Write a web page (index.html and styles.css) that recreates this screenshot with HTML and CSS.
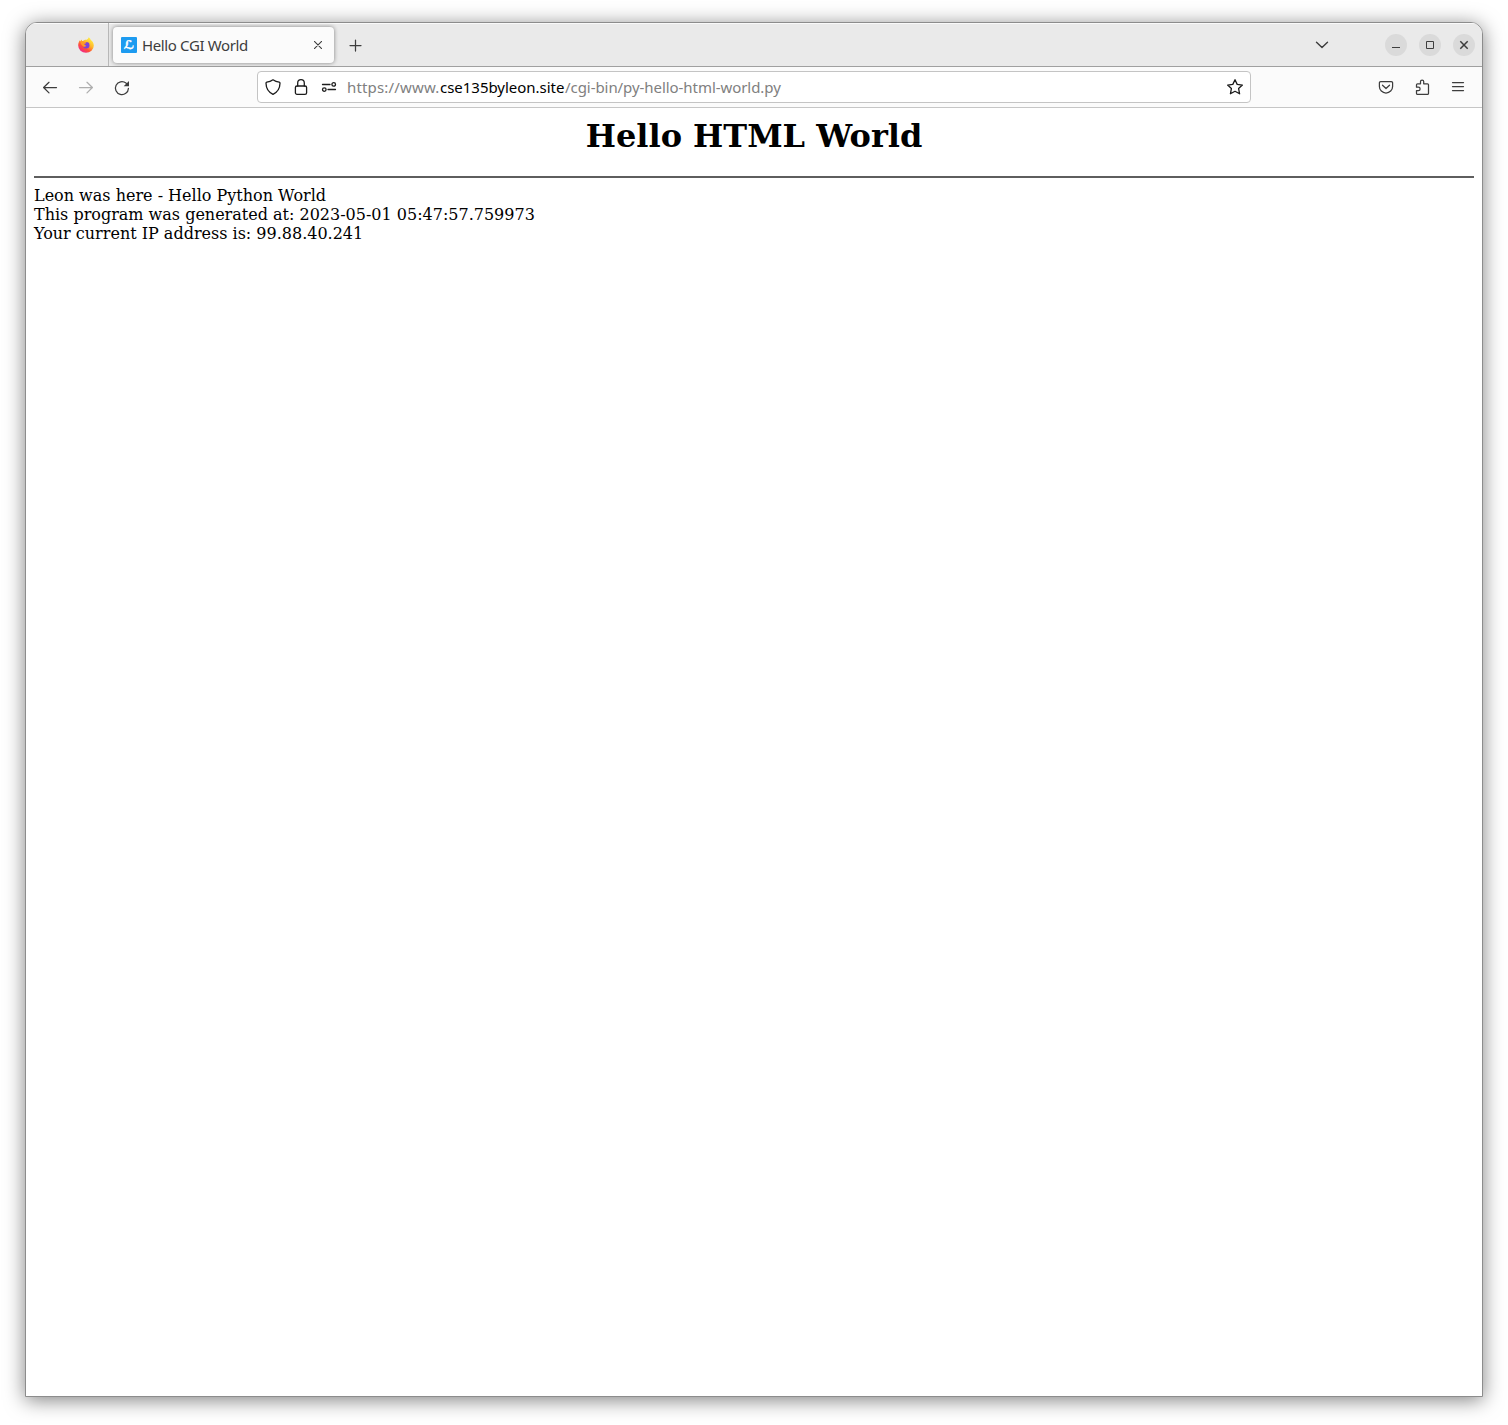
FILE: index.html
```html
<!DOCTYPE html>
<html lang="en">
<head>
<meta charset="utf-8">
<title>Hello CGI World</title>
<link rel="stylesheet" href="styles.css">
</head>
<body>
<div class="window">
  <header class="tabbar">
    <div class="firefox-view">
      <svg width="16" height="16" viewBox="0 0 16 16">
        <defs>
          <linearGradient id="flame" x1="0.85" y1="0.1" x2="0.25" y2="0.95">
            <stop offset="0" stop-color="#fff044"/>
            <stop offset="0.4" stop-color="#ffb52a"/>
            <stop offset="0.7" stop-color="#ff5036"/>
            <stop offset="1" stop-color="#f0288a"/>
          </linearGradient>
        </defs>
        <path fill="url(#flame)" d="M10.7.3c1.1.7 1.8 1.700 2.100 2.800 1.700 1 3 3.200 3 5.400a7.800 7.300 0 0 1-15.600 0c0-2 .6-3.800 1.700-5.200l.2 1.100 1.400-1.800c.1.8.5 1.300 1 1.700 1.100-1.300 2.600-1.800 4.200-1.600 1-.5 1.700-1.300 2-2.400z"/>
        <circle cx="8.300" cy="8.200" r="3.200" fill="#7b42dc"/>
        <path fill="#ff9a27" d="M2.500 4.300c1.500-.5 3 0 3.900.7l2 .2c.2.7-.6 1.200-1.700 1.500-.4.500-.3 1 0 1.300.5.500 1 .4 1.500.4-.4 1.300-1.700 1.800-3.300.8L3 7z"/>
      </svg>
    </div>
    <div class="tab">
      <span class="favicon">ℒ</span>
      <span class="tab-title">Hello CGI World</span>
      <svg class="tab-close" width="8" height="8" viewBox="0 0 8 8"><path d="M.4.4l7.200 7.200M7.600.4L.4 7.600"/></svg>
    </div>
    <svg class="new-tab" width="13" height="13" viewBox="0 0 13 13"><path d="M6.500 1v11M1 6.500h11"/></svg>
    <svg class="all-tabs" width="14" height="8" viewBox="0 0 14 8"><path d="M1.500 1.200L7 6.600l5.500-5.400"/></svg>
    <div class="controls">
      <span class="control"><svg width="22" height="22" viewBox="0 0 22 22"><path d="M7 13.500h8"/></svg></span>
      <span class="control"><svg width="22" height="22" viewBox="0 0 22 22"><path d="M7.500 7.500h7v7h-7z"/></svg></span>
      <span class="control"><svg width="22" height="22" viewBox="0 0 22 22"><path stroke-width="1.500" d="M7.300 7.300l7.400 7.400M14.700 7.300l-7.400 7.400"/></svg></span>
    </div>
  </header>
  <nav class="toolbar">
    <div class="nav-buttons">
      <svg width="16" height="16" viewBox="0 0 16 16"><path d="M14.500 7.500H1.800M7 2.300L1.600 7.500 7 12.900"/></svg>
      <svg class="disabled" width="16" height="16" viewBox="0 0 16 16"><path d="M1.500 7.500h12.700M9 2.300l5.400 5.200L9 12.900"/></svg>
      <svg width="16" height="16" viewBox="0 0 16 16"><path d="M14.400 8.400A6.500 6.500 0 1 1 12 3.100l1.500 1.500"/><path class="solid" d="M15 1v5.300H9.700z"/></svg>
    </div>
    <div class="urlbar">
      <svg width="16" height="16" viewBox="0 0 16 16"><path d="M8 .8c1.900 1.300 4 2.100 6.200 2.400.8.1.8.6.8 1.100C14.900 9.200 13 13 8 15.300 3 13 1.100 9.200 1 4.300c0-.5 0-1 .8-1.100C4 2.900 6.100 2.100 8 .8z"/></svg>
      <svg width="16" height="16" viewBox="0 0 16 16"><rect x="2.400" y="7" width="11.200" height="8.300" rx="1.600"/><path d="M4.700 7V4a3.300 3.300 0 0 1 6.600 0v3"/></svg>
      <svg width="16" height="16" viewBox="0 0 16 16"><path d="M1.500 5.500h7.500M7 10.500h7.500"/><circle cx="12.700" cy="5.400" r="1.800"/><circle cx="3.300" cy="10.600" r="1.800"/></svg>
      <div class="url"><span class="scheme">https://www.</span><span class="domain">cse135byleon.site</span><span class="path">/cgi-bin/py-hello-html-world.py</span></div>
      <svg class="star" width="18" height="18" viewBox="0 0 18 18"><path d="M9 1.700l2.200 4.700 5.200.7-3.800 3.500 1 5.200L9 13.300l-4.600 2.500 1-5.200L1.600 7.100l5.200-.7z"/></svg>
    </div>
    <div class="actions">
      <svg width="16" height="16" viewBox="0 0 16 16"><path d="M2.700 2.600h10.600a1.300 1.300 0 0 1 1.300 1.300v3.500a6.600 6.600 0 0 1-13.200 0V3.900a1.300 1.300 0 0 1 1.300-1.300z"/><path d="M4.500 6.200L8 9.500l3.500-3.300"/></svg>
      <svg width="16" height="16" viewBox="0 0 16 16"><path d="M2.500 8.200V5.800q0-1 1-1h3V2.600a1.600 1.600 0 0 1 3.200 0v2.200h3.800q1 0 1 1v8.600q0 1-1 1h-10q-1 0-1-1v-2.800h1.900a1.700 1.700 0 0 0 0-3.400z"/></svg>
      <svg width="16" height="16" viewBox="0 0 16 16"><path d="M2.500 3.500h11M2.500 7.500h11M2.500 11.500h11"/></svg>
    </div>
  </nav>
  <main class="page">
    <h1>Hello HTML World</h1>
    <hr>
    <p>Leon was here - Hello Python World<br>This program was generated at: 2023-05-01 05:47:57.759973<br>Your current IP address is: 99.88.40.241</p>
  </main>
</div>
</body>
</html>
```
FILE: styles.css
```css
* { box-sizing: border-box; }
body {
  margin: 0;
  height: 1425px;
  padding: 22px 25px 28px;
  background: #fff;
  overflow: hidden;
}
svg {
  display: block;
  flex: none;
  fill: none;
  stroke: #3d3d3d;
  stroke-width: 1.25;
  stroke-linejoin: round;
  stroke-linecap: round;
}
.window {
  height: 1375px;
  display: flex;
  flex-direction: column;
  border: 1px solid #8c8c8c;
  border-radius: 12px 12px 0 0;
  background: #fff;
  box-shadow: 0 3px 20px rgba(0, 0, 0, .5);
  overflow: hidden;
}
.tabbar {
  height: 44px;
  flex: none;
  display: flex;
  align-items: center;
  background: #eaeaea;
  border-bottom: 1px solid #a0a0a0;
  box-shadow: inset 0 1px #fafafa;
  font-family: "Noto Sans", sans-serif;
}
.firefox-view {
  width: 83px;
  height: 43px;
  padding: 14px 0 0 52px;
  border-right: 1px solid #b8b8b8;
}
.firefox-view svg { stroke: none; }
.tab {
  width: 221px;
  height: 36px;
  margin: 1px 0 0 4px;
  padding: 0 12px 0 8px;
  display: flex;
  align-items: center;
  border-radius: 4px;
  background: #fbfbfb;
  box-shadow: 0 0 4px rgba(0, 0, 0, .45);
}
.favicon {
  width: 16px;
  height: 16px;
  border-radius: 1px;
  background: #1d9bf0;
  color: #fff;
  font: bold 12px/16px "DejaVu Sans", sans-serif;
  text-align: center;
  -webkit-text-stroke: .4px #fff;
}
.tab-title {
  margin-left: 5px;
  font-size: 15px;
  line-height: 20px;
  letter-spacing: -.37px;
  color: #3d3d3d;
  white-space: nowrap;
}
.tab-close { margin-left: auto; stroke-width: 1.1; }
.new-tab { margin: 1px 0 0 15px; }
.all-tabs { margin-left: auto; stroke-width: 1.4; }
.controls { display: flex; gap: 12px; margin: 0 7px 0 56px; }
.control { width: 22px; height: 22px; border-radius: 50%; background: #dadada; }
.control svg { stroke-width: 1; stroke-linecap: butt; stroke-linejoin: miter; }
.toolbar {
  height: 41px;
  flex: none;
  display: flex;
  align-items: center;
  background: #fbfbfb;
  border-bottom: 1px solid #c6c6c6;
}
.nav-buttons { display: flex; gap: 20px; margin: 1px 0 0 16px; }
.nav-buttons .disabled { opacity: .4; }
.solid { fill: #3d3d3d; stroke: none; }
.urlbar {
  width: 994px;
  height: 32px;
  margin-left: 127px;
  padding: 0 6px 0 7px;
  display: flex;
  align-items: center;
  gap: 12px;
  border: 1px solid #c4c4c4;
  border-radius: 4px;
  background: #fff;
}
.urlbar svg { stroke: #1c1c1c; stroke-width: 1.3; }
.url {
  display: flex;
  margin-left: -2px;
  font: 15px/20px "Noto Sans", sans-serif;
  color: #808080;
  white-space: nowrap;
}
.scheme { width: 93px; letter-spacing: .17px; }
.domain { width: 125px; color: #000; letter-spacing: -.02px; }
.path { letter-spacing: -.06px; }
.star { margin-left: auto; }
.actions { display: flex; gap: 20px; margin: 0 16px 0 auto; }
.page {
  padding: 9px 8px 8px;
  font: 16px/19px "DejaVu Serif", serif;
  color: #000;
}
h1 { margin: 0 0 20px; font-size: 32px; line-height: 39px; text-align: center; }
hr { height: 2px; margin: 0 0 8px; border: 0; background: #5e5e5e; }
p { margin: 0; }
```
